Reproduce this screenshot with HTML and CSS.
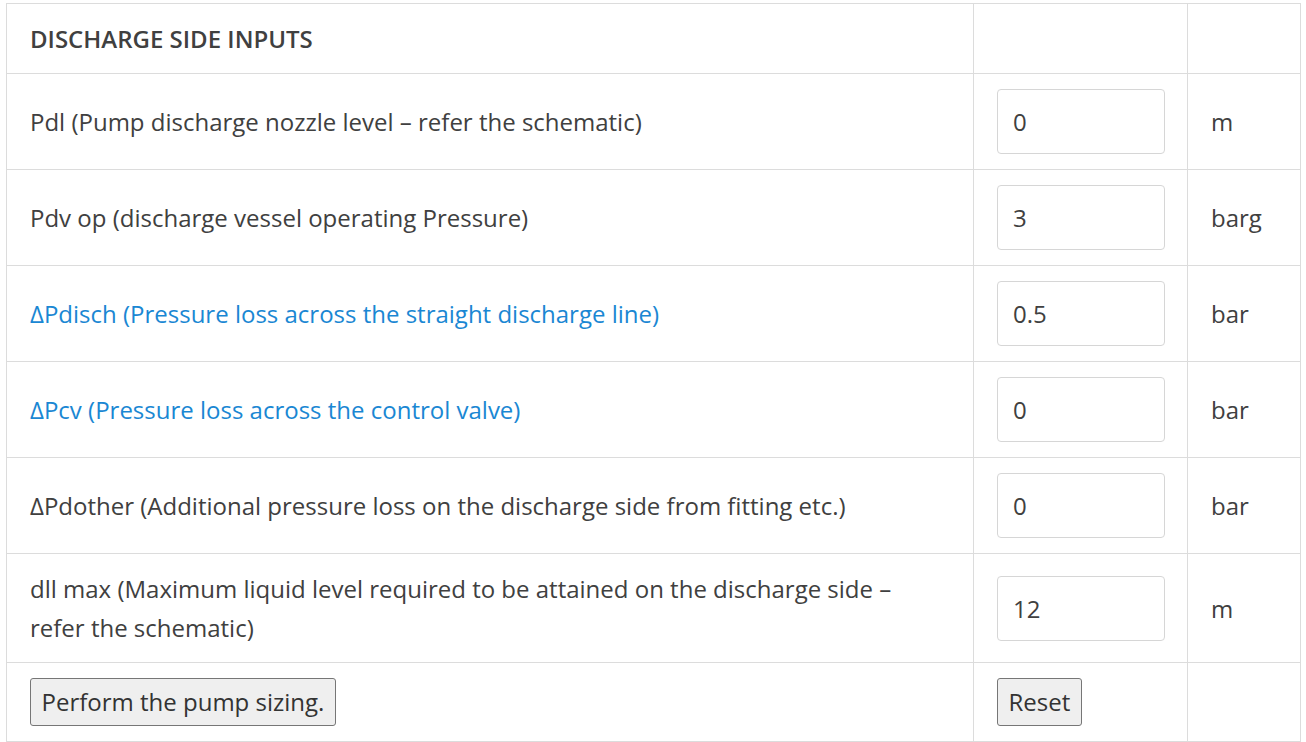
FILE: index.html
```html
<!DOCTYPE html>
<html>
<head>
<meta charset="utf-8">
<link rel="stylesheet" href="styles.css">
</head>
<body>
<table class="inputs">
  <colgroup>
    <col class="c-label">
    <col class="c-value">
    <col class="c-unit">
  </colgroup>
  <tr>
    <td class="heading">DISCHARGE SIDE INPUTS</td>
    <td></td>
    <td></td>
  </tr>
  <tr>
    <td>Pdl (Pump discharge nozzle level – refer the schematic)</td>
    <td><input class="field" type="text" value="0"></td>
    <td>m</td>
  </tr>
  <tr>
    <td>Pdv op (discharge vessel operating Pressure)</td>
    <td><input class="field" type="text" value="3"></td>
    <td>barg</td>
  </tr>
  <tr>
    <td class="link">ΔPdisch (Pressure loss across the straight discharge line)</td>
    <td><input class="field" type="text" value="0.5"></td>
    <td>bar</td>
  </tr>
  <tr>
    <td class="link">ΔPcv (Pressure loss across the control valve)</td>
    <td><input class="field" type="text" value="0"></td>
    <td>bar</td>
  </tr>
  <tr>
    <td>ΔPdother (Additional pressure loss on the discharge side from fitting etc.)</td>
    <td><input class="field" type="text" value="0"></td>
    <td>bar</td>
  </tr>
  <tr>
    <td>dll max (Maximum liquid level required to be attained on the discharge side –<br>refer the schematic)</td>
    <td><input class="field" type="text" value="12"></td>
    <td>m</td>
  </tr>
  <tr>
    <td><button class="btn">Perform the pump sizing.</button></td>
    <td><button class="btn">Reset</button></td>
    <td></td>
  </tr>
</table>
</body>
</html>
```

FILE: styles.css
```css
html, body {
  margin: 0;
  padding: 0;
  background: #ffffff;
}
body {
  padding: 3px 0 0 6px;
  font-family: "Open Sans", "Liberation Sans", sans-serif;
  font-size: 24px;
  color: #404040;
}
.inputs {
  border-collapse: collapse;
  table-layout: fixed;
  width: 1294px;
}
.c-label { width: 967px; }
.c-value { width: 214px; }
.c-unit { width: 113px; }
.inputs td {
  border: 1px solid #dcdcdc;
  padding: 15px 23px;
  line-height: 39px;
  vertical-align: middle;
  text-align: left;
}
.heading {
  font-weight: 600;
}
.link {
  color: #1a87d3;
}
.field {
  display: block;
  box-sizing: border-box;
  width: 168px;
  height: 65px;
  margin: 0;
  padding: 0 15px;
  border: 1px solid #d6d6d6;
  border-radius: 4px;
  background: #fff;
  font-family: "Open Sans", "Liberation Sans", sans-serif;
  font-size: 24px;
  color: #404040;
  outline: none;
}
.btn {
  display: block;
  box-sizing: border-box;
  height: 48px;
  margin: 0;
  padding: 0 10.5px;
  border: 1px solid #767676;
  border-radius: 3px;
  background: #efefef;
  font-family: "Open Sans", "Liberation Sans", sans-serif;
  font-size: 24px;
  color: #333;
  line-height: 46px;
}
```
